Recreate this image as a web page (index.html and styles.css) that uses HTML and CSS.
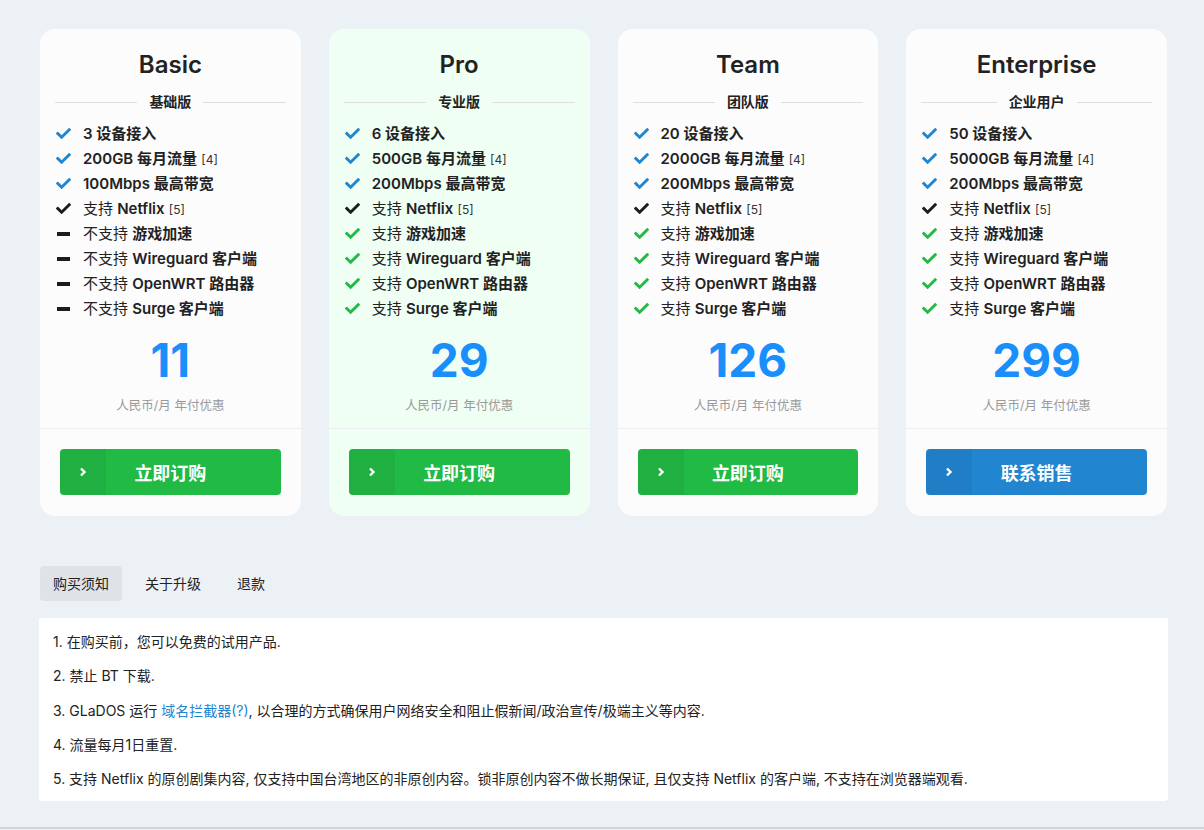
FILE: index.html
```html
<!DOCTYPE html>
<html>
<head>
    <title>Pricing</title>
    <link rel="stylesheet" href="styles.css">
</head>
<body>
    <div class="page">
        <div class="plans">
            <!-- Basic -->
            <div class="plan">
                <div class="plan-top">
                    <h2 class="plan-name">Basic</h2>
                    <div class="plan-sub"><span>基础版</span></div>
                    <ul class="features">
                        <li><svg class="ic blue" viewBox="0 0 512 512"><path d="M173.9 439.4l-166.4-166.4c-10-10-10-26.2 0-36.2l36.2-36.2c10-10 26.2-10 36.2 0L192 312.7 432.1 72.6c10-10 26.2-10 36.2 0l36.2 36.2c10 10 10 26.2 0 36.2l-294.4 294.4c-10 10-26.2 10-36.2 0z"/></svg><b>3 设备接入</b></li>
                        <li><svg class="ic blue" viewBox="0 0 512 512"><path d="M173.9 439.4l-166.4-166.4c-10-10-10-26.2 0-36.2l36.2-36.2c10-10 26.2-10 36.2 0L192 312.7 432.1 72.6c10-10 26.2-10 36.2 0l36.2 36.2c10 10 10 26.2 0 36.2l-294.4 294.4c-10 10-26.2 10-36.2 0z"/></svg><b>200GB 每月流量</b> <small>[4]</small></li>
                        <li><svg class="ic blue" viewBox="0 0 512 512"><path d="M173.9 439.4l-166.4-166.4c-10-10-10-26.2 0-36.2l36.2-36.2c10-10 26.2-10 36.2 0L192 312.7 432.1 72.6c10-10 26.2-10 36.2 0l36.2 36.2c10 10 10 26.2 0 36.2l-294.4 294.4c-10 10-26.2 10-36.2 0z"/></svg><b>100Mbps 最高带宽</b></li>
                        <li><svg class="ic dark" viewBox="0 0 512 512"><path d="M173.9 439.4l-166.4-166.4c-10-10-10-26.2 0-36.2l36.2-36.2c10-10 26.2-10 36.2 0L192 312.7 432.1 72.6c10-10 26.2-10 36.2 0l36.2 36.2c10 10 10 26.2 0 36.2l-294.4 294.4c-10 10-26.2 10-36.2 0z"/></svg>支持 <b>Netflix</b> <small>[5]</small></li>
                        <li><span class="minus"></span>不支持 <b>游戏加速</b></li>
                        <li><span class="minus"></span>不支持 <b>Wireguard 客户端</b></li>
                        <li><span class="minus"></span>不支持 <b>OpenWRT 路由器</b></li>
                        <li><span class="minus"></span>不支持 <b>Surge 客户端</b></li>
                    </ul>
                    <div class="price">11</div>
                    <div class="price-note">人民币/月 年付优惠</div>
                </div>
                <div class="plan-bottom">
                    <a class="buy green" href="#"><span class="buy-arrow"><svg viewBox="0 0 10 10"><path d="M3 1.5 6.5 5 3 8.5"/></svg></span><span class="buy-text">立即订购</span></a>
                </div>
            </div>

            <!-- Pro -->
            <div class="plan plan-pro">
                <div class="plan-top">
                    <h2 class="plan-name">Pro</h2>
                    <div class="plan-sub"><span>专业版</span></div>
                    <ul class="features">
                        <li><svg class="ic blue" viewBox="0 0 512 512"><path d="M173.9 439.4l-166.4-166.4c-10-10-10-26.2 0-36.2l36.2-36.2c10-10 26.2-10 36.2 0L192 312.7 432.1 72.6c10-10 26.2-10 36.2 0l36.2 36.2c10 10 10 26.2 0 36.2l-294.4 294.4c-10 10-26.2 10-36.2 0z"/></svg><b>6 设备接入</b></li>
                        <li><svg class="ic blue" viewBox="0 0 512 512"><path d="M173.9 439.4l-166.4-166.4c-10-10-10-26.2 0-36.2l36.2-36.2c10-10 26.2-10 36.2 0L192 312.7 432.1 72.6c10-10 26.2-10 36.2 0l36.2 36.2c10 10 10 26.2 0 36.2l-294.4 294.4c-10 10-26.2 10-36.2 0z"/></svg><b>500GB 每月流量</b> <small>[4]</small></li>
                        <li><svg class="ic blue" viewBox="0 0 512 512"><path d="M173.9 439.4l-166.4-166.4c-10-10-10-26.2 0-36.2l36.2-36.2c10-10 26.2-10 36.2 0L192 312.7 432.1 72.6c10-10 26.2-10 36.2 0l36.2 36.2c10 10 10 26.2 0 36.2l-294.4 294.4c-10 10-26.2 10-36.2 0z"/></svg><b>200Mbps 最高带宽</b></li>
                        <li><svg class="ic dark" viewBox="0 0 512 512"><path d="M173.9 439.4l-166.4-166.4c-10-10-10-26.2 0-36.2l36.2-36.2c10-10 26.2-10 36.2 0L192 312.7 432.1 72.6c10-10 26.2-10 36.2 0l36.2 36.2c10 10 10 26.2 0 36.2l-294.4 294.4c-10 10-26.2 10-36.2 0z"/></svg>支持 <b>Netflix</b> <small>[5]</small></li>
                        <li><svg class="ic green" viewBox="0 0 512 512"><path d="M173.9 439.4l-166.4-166.4c-10-10-10-26.2 0-36.2l36.2-36.2c10-10 26.2-10 36.2 0L192 312.7 432.1 72.6c10-10 26.2-10 36.2 0l36.2 36.2c10 10 10 26.2 0 36.2l-294.4 294.4c-10 10-26.2 10-36.2 0z"/></svg>支持 <b>游戏加速</b></li>
                        <li><svg class="ic green" viewBox="0 0 512 512"><path d="M173.9 439.4l-166.4-166.4c-10-10-10-26.2 0-36.2l36.2-36.2c10-10 26.2-10 36.2 0L192 312.7 432.1 72.6c10-10 26.2-10 36.2 0l36.2 36.2c10 10 10 26.2 0 36.2l-294.4 294.4c-10 10-26.2 10-36.2 0z"/></svg>支持 <b>Wireguard 客户端</b></li>
                        <li><svg class="ic green" viewBox="0 0 512 512"><path d="M173.9 439.4l-166.4-166.4c-10-10-10-26.2 0-36.2l36.2-36.2c10-10 26.2-10 36.2 0L192 312.7 432.1 72.6c10-10 26.2-10 36.2 0l36.2 36.2c10 10 10 26.2 0 36.2l-294.4 294.4c-10 10-26.2 10-36.2 0z"/></svg>支持 <b>OpenWRT 路由器</b></li>
                        <li><svg class="ic green" viewBox="0 0 512 512"><path d="M173.9 439.4l-166.4-166.4c-10-10-10-26.2 0-36.2l36.2-36.2c10-10 26.2-10 36.2 0L192 312.7 432.1 72.6c10-10 26.2-10 36.2 0l36.2 36.2c10 10 10 26.2 0 36.2l-294.4 294.4c-10 10-26.2 10-36.2 0z"/></svg>支持 <b>Surge 客户端</b></li>
                    </ul>
                    <div class="price">29</div>
                    <div class="price-note">人民币/月 年付优惠</div>
                </div>
                <div class="plan-bottom">
                    <a class="buy green" href="#"><span class="buy-arrow"><svg viewBox="0 0 10 10"><path d="M3 1.5 6.5 5 3 8.5"/></svg></span><span class="buy-text">立即订购</span></a>
                </div>
            </div>

            <!-- Team -->
            <div class="plan">
                <div class="plan-top">
                    <h2 class="plan-name">Team</h2>
                    <div class="plan-sub"><span>团队版</span></div>
                    <ul class="features">
                        <li><svg class="ic blue" viewBox="0 0 512 512"><path d="M173.9 439.4l-166.4-166.4c-10-10-10-26.2 0-36.2l36.2-36.2c10-10 26.2-10 36.2 0L192 312.7 432.1 72.6c10-10 26.2-10 36.2 0l36.2 36.2c10 10 10 26.2 0 36.2l-294.4 294.4c-10 10-26.2 10-36.2 0z"/></svg><b>20 设备接入</b></li>
                        <li><svg class="ic blue" viewBox="0 0 512 512"><path d="M173.9 439.4l-166.4-166.4c-10-10-10-26.2 0-36.2l36.2-36.2c10-10 26.2-10 36.2 0L192 312.7 432.1 72.6c10-10 26.2-10 36.2 0l36.2 36.2c10 10 10 26.2 0 36.2l-294.4 294.4c-10 10-26.2 10-36.2 0z"/></svg><b>2000GB 每月流量</b> <small>[4]</small></li>
                        <li><svg class="ic blue" viewBox="0 0 512 512"><path d="M173.9 439.4l-166.4-166.4c-10-10-10-26.2 0-36.2l36.2-36.2c10-10 26.2-10 36.2 0L192 312.7 432.1 72.6c10-10 26.2-10 36.2 0l36.2 36.2c10 10 10 26.2 0 36.2l-294.4 294.4c-10 10-26.2 10-36.2 0z"/></svg><b>200Mbps 最高带宽</b></li>
                        <li><svg class="ic dark" viewBox="0 0 512 512"><path d="M173.9 439.4l-166.4-166.4c-10-10-10-26.2 0-36.2l36.2-36.2c10-10 26.2-10 36.2 0L192 312.7 432.1 72.6c10-10 26.2-10 36.2 0l36.2 36.2c10 10 10 26.2 0 36.2l-294.4 294.4c-10 10-26.2 10-36.2 0z"/></svg>支持 <b>Netflix</b> <small>[5]</small></li>
                        <li><svg class="ic green" viewBox="0 0 512 512"><path d="M173.9 439.4l-166.4-166.4c-10-10-10-26.2 0-36.2l36.2-36.2c10-10 26.2-10 36.2 0L192 312.7 432.1 72.6c10-10 26.2-10 36.2 0l36.2 36.2c10 10 10 26.2 0 36.2l-294.4 294.4c-10 10-26.2 10-36.2 0z"/></svg>支持 <b>游戏加速</b></li>
                        <li><svg class="ic green" viewBox="0 0 512 512"><path d="M173.9 439.4l-166.4-166.4c-10-10-10-26.2 0-36.2l36.2-36.2c10-10 26.2-10 36.2 0L192 312.7 432.1 72.6c10-10 26.2-10 36.2 0l36.2 36.2c10 10 10 26.2 0 36.2l-294.4 294.4c-10 10-26.2 10-36.2 0z"/></svg>支持 <b>Wireguard 客户端</b></li>
                        <li><svg class="ic green" viewBox="0 0 512 512"><path d="M173.9 439.4l-166.4-166.4c-10-10-10-26.2 0-36.2l36.2-36.2c10-10 26.2-10 36.2 0L192 312.7 432.1 72.6c10-10 26.2-10 36.2 0l36.2 36.2c10 10 10 26.2 0 36.2l-294.4 294.4c-10 10-26.2 10-36.2 0z"/></svg>支持 <b>OpenWRT 路由器</b></li>
                        <li><svg class="ic green" viewBox="0 0 512 512"><path d="M173.9 439.4l-166.4-166.4c-10-10-10-26.2 0-36.2l36.2-36.2c10-10 26.2-10 36.2 0L192 312.7 432.1 72.6c10-10 26.2-10 36.2 0l36.2 36.2c10 10 10 26.2 0 36.2l-294.4 294.4c-10 10-26.2 10-36.2 0z"/></svg>支持 <b>Surge 客户端</b></li>
                    </ul>
                    <div class="price">126</div>
                    <div class="price-note">人民币/月 年付优惠</div>
                </div>
                <div class="plan-bottom">
                    <a class="buy green" href="#"><span class="buy-arrow"><svg viewBox="0 0 10 10"><path d="M3 1.5 6.5 5 3 8.5"/></svg></span><span class="buy-text">立即订购</span></a>
                </div>
            </div>

            <!-- Enterprise -->
            <div class="plan">
                <div class="plan-top">
                    <h2 class="plan-name">Enterprise</h2>
                    <div class="plan-sub"><span>企业用户</span></div>
                    <ul class="features">
                        <li><svg class="ic blue" viewBox="0 0 512 512"><path d="M173.9 439.4l-166.4-166.4c-10-10-10-26.2 0-36.2l36.2-36.2c10-10 26.2-10 36.2 0L192 312.7 432.1 72.6c10-10 26.2-10 36.2 0l36.2 36.2c10 10 10 26.2 0 36.2l-294.4 294.4c-10 10-26.2 10-36.2 0z"/></svg><b>50 设备接入</b></li>
                        <li><svg class="ic blue" viewBox="0 0 512 512"><path d="M173.9 439.4l-166.4-166.4c-10-10-10-26.2 0-36.2l36.2-36.2c10-10 26.2-10 36.2 0L192 312.7 432.1 72.6c10-10 26.2-10 36.2 0l36.2 36.2c10 10 10 26.2 0 36.2l-294.4 294.4c-10 10-26.2 10-36.2 0z"/></svg><b>5000GB 每月流量</b> <small>[4]</small></li>
                        <li><svg class="ic blue" viewBox="0 0 512 512"><path d="M173.9 439.4l-166.4-166.4c-10-10-10-26.2 0-36.2l36.2-36.2c10-10 26.2-10 36.2 0L192 312.7 432.1 72.6c10-10 26.2-10 36.2 0l36.2 36.2c10 10 10 26.2 0 36.2l-294.4 294.4c-10 10-26.2 10-36.2 0z"/></svg><b>200Mbps 最高带宽</b></li>
                        <li><svg class="ic dark" viewBox="0 0 512 512"><path d="M173.9 439.4l-166.4-166.4c-10-10-10-26.2 0-36.2l36.2-36.2c10-10 26.2-10 36.2 0L192 312.7 432.1 72.6c10-10 26.2-10 36.2 0l36.2 36.2c10 10 10 26.2 0 36.2l-294.4 294.4c-10 10-26.2 10-36.2 0z"/></svg>支持 <b>Netflix</b> <small>[5]</small></li>
                        <li><svg class="ic green" viewBox="0 0 512 512"><path d="M173.9 439.4l-166.4-166.4c-10-10-10-26.2 0-36.2l36.2-36.2c10-10 26.2-10 36.2 0L192 312.7 432.1 72.6c10-10 26.2-10 36.2 0l36.2 36.2c10 10 10 26.2 0 36.2l-294.4 294.4c-10 10-26.2 10-36.2 0z"/></svg>支持 <b>游戏加速</b></li>
                        <li><svg class="ic green" viewBox="0 0 512 512"><path d="M173.9 439.4l-166.4-166.4c-10-10-10-26.2 0-36.2l36.2-36.2c10-10 26.2-10 36.2 0L192 312.7 432.1 72.6c10-10 26.2-10 36.2 0l36.2 36.2c10 10 10 26.2 0 36.2l-294.4 294.4c-10 10-26.2 10-36.2 0z"/></svg>支持 <b>Wireguard 客户端</b></li>
                        <li><svg class="ic green" viewBox="0 0 512 512"><path d="M173.9 439.4l-166.4-166.4c-10-10-10-26.2 0-36.2l36.2-36.2c10-10 26.2-10 36.2 0L192 312.7 432.1 72.6c10-10 26.2-10 36.2 0l36.2 36.2c10 10 10 26.2 0 36.2l-294.4 294.4c-10 10-26.2 10-36.2 0z"/></svg>支持 <b>OpenWRT 路由器</b></li>
                        <li><svg class="ic green" viewBox="0 0 512 512"><path d="M173.9 439.4l-166.4-166.4c-10-10-10-26.2 0-36.2l36.2-36.2c10-10 26.2-10 36.2 0L192 312.7 432.1 72.6c10-10 26.2-10 36.2 0l36.2 36.2c10 10 10 26.2 0 36.2l-294.4 294.4c-10 10-26.2 10-36.2 0z"/></svg>支持 <b>Surge 客户端</b></li>
                    </ul>
                    <div class="price">299</div>
                    <div class="price-note">人民币/月 年付优惠</div>
                </div>
                <div class="plan-bottom">
                    <a class="buy blue-btn" href="#"><span class="buy-arrow"><svg viewBox="0 0 10 10"><path d="M3 1.5 6.5 5 3 8.5"/></svg></span><span class="buy-text">联系销售</span></a>
                </div>
            </div>
        </div>

        <div class="tabs">
            <a class="tab active" href="#">购买须知</a>
            <a class="tab" href="#">关于升级</a>
            <a class="tab" href="#">退款</a>
        </div>

        <div class="notice">
            <p>1. 在购买前，您可以免费的试用产品.</p>
            <p>2. 禁止 BT 下载.</p>
            <p>3. GLaDOS 运行 <a href="#">域名拦截器(?)</a>, 以合理的方式确保用户网络安全和阻止假新闻/政治宣传/极端主义等内容.</p>
            <p>4. 流量每月1日重置.</p>
            <p>5. 支持 Netflix 的原创剧集内容, 仅支持中国台湾地区的非原创内容。锁非原创内容不做长期保证, 且仅支持 Netflix 的客户端, 不支持在浏览器端观看.</p>
        </div>
    </div>
    <div class="footer-line"></div>
</body>
</html>
```

FILE: styles.css
```css
body {
    margin: 0;
    background: #ecf1f5;
    font-family: Inter, "Noto Sans CJK SC", sans-serif;
    color: #222;
    height: 830px;
    overflow: hidden;
}

.page {
    width: 1128px;
    margin-left: 40px;
    padding-top: 29px;
}

.plans {
    display: grid;
    grid-template-columns: repeat(4, 1fr);
    gap: 28px;
    width: 1127px;
}

.plan {
    background: #fcfcfd;
    border-radius: 15px;
    overflow: hidden;
}

.plan-pro {
    background: #effff3;
}

.plan-top {
    padding: 21px 15px 12px;
    border-bottom: 1px solid #ebedf0;
}

.plan-name {
    margin: 0;
    text-align: center;
    font-size: 24px;
    line-height: 30px;
    font-weight: 600;
    color: #222;
}

.plan-sub {
    display: flex;
    align-items: center;
    gap: 12px;
    margin-top: 12px;
    font-size: 14px;
    line-height: 20px;
    font-weight: 700;
}

.plan-sub::before,
.plan-sub::after {
    content: "";
    flex: 1;
    height: 1px;
    background: #dcdee0;
}

.features {
    list-style: none;
    margin: 9px 0 0;
    padding: 0 0 0 1px;
}

.features li {
    height: 25px;
    line-height: 25px;
    font-size: 15px;
    white-space: nowrap;
}

.features b {
    font-weight: 600;
}

.features small {
    font-size: 12px;
    color: #333;
}

.ic {
    width: 15px;
    height: 15px;
    margin-right: 12px;
    vertical-align: -2px;
}

.ic.blue { fill: #2185d0; }
.ic.dark { fill: #1b1c1d; }
.ic.green { fill: #21ba45; }

.minus {
    display: inline-block;
    width: 13px;
    height: 4px;
    background: #1b1c1d;
    margin: 0 13px 0 1px;
    vertical-align: 3px;
}

.price {
    margin-top: 14px;
    text-align: center;
    font-size: 46px;
    line-height: 50px;
    font-weight: 700;
    color: #1a8ffc;
}

.price-note {
    margin-top: 11px;
    text-align: center;
    font-size: 12.5px;
    line-height: 20px;
    color: #999;
}

.plan-bottom {
    padding: 20px 20px 21px;
}

.buy {
    display: flex;
    height: 46px;
    border-radius: 4px;
    overflow: hidden;
    text-decoration: none;
    color: #fff;
}

.buy.green { background: #21ba45; }
.buy.blue-btn { background: #2185d0; }

.buy-arrow {
    width: 46px;
    display: flex;
    align-items: center;
    justify-content: center;
    background: rgba(0, 0, 0, 0.05);
}

.buy-arrow svg {
    width: 10px;
    height: 10px;
    fill: none;
    stroke: #fff;
    stroke-width: 2.4;
}

.buy-text {
    flex: 1;
    display: flex;
    align-items: center;
    justify-content: center;
    font-size: 18px;
    font-weight: 700;
    padding-right: 46px;
}

.tabs {
    display: flex;
    gap: 10px;
    margin-top: 50px;
}

.tab {
    height: 35px;
    line-height: 35px;
    padding: 0 13px;
    border-radius: 4px;
    font-size: 14px;
    color: #222;
    text-decoration: none;
}

.tab.active {
    background: #dfe3e8;
}

.notice {
    margin-top: 17px;
    margin-left: -1px;
    background: #fff;
    border-radius: 0 0 4px 4px;
    padding: 14px 14px 12px;
}

.notice p {
    margin: 0 0 14.3px;
    font-size: 14px;
    line-height: 20px;
    color: #222;
}

.notice p:last-child {
    margin-bottom: 0;
}

.notice a {
    color: #2185d0;
    text-decoration: none;
}

.footer-line {
    margin-top: 26px;
    height: 2px;
    background: #d4d6d8;
}
```
